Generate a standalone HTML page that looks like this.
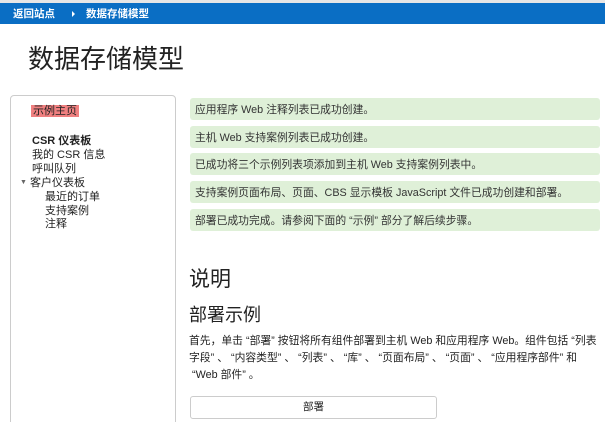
<!DOCTYPE html>
<html><head><meta charset="utf-8"><style>
*{margin:0;padding:0;box-sizing:border-box}
html,body{width:605px;height:422px;overflow:hidden}
body{background:#fff;font-family:"Liberation Sans","Noto Sans CJK SC",sans-serif;color:#222;position:relative}
.top{position:absolute;left:0;top:0;width:605px;height:3px;background:#e6e6e6}
.bar{position:absolute;left:0;top:3px;width:605px;height:21px;background:#0a6ec4;color:#fff;font-size:10.5px;font-weight:bold;line-height:22px;padding-left:13px}
.bar .arr{display:inline-block;width:0;height:0;border-left:3px solid #fff;border-top:3px solid transparent;border-bottom:3px solid transparent;margin:0 11px 1px 17px;vertical-align:middle}
h1{position:absolute;left:28px;top:42px;font-size:26px;font-weight:normal;color:#222;line-height:34px}
.nav{position:absolute;left:10px;top:95px;width:166px;height:340px;border:1px solid #ccc;border-radius:4px}
.nav div{position:absolute;font-size:11px;line-height:14px;white-space:nowrap}
.hl{background:#f08080;padding:0 2px}
.msg{position:absolute;left:190px;width:410px;height:22px;background:#dff0d8;border-radius:3px;font-size:10.8px;display:flex;align-items:center;padding-left:5px;color:#333}
h2{position:absolute;left:189px;top:266px;font-size:21px;font-weight:normal;line-height:28px}
h3{position:absolute;left:189px;top:302px;font-size:18px;font-weight:normal;line-height:26px}
p{position:absolute;left:189px;top:333px;width:415px;font-size:10.8px;line-height:17px;color:#222;white-space:nowrap}
.btn{position:absolute;left:190px;top:396px;width:247px;height:23px;border:1px solid #ccc;border-radius:3px;font-size:10.5px;line-height:21px;text-align:center}
</style></head><body>
<div class="top"></div>
<div class="bar">返回站点<span class="arr"></span>数据存储模型</div>
<h1>数据存储模型</h1>
<div class="nav">
<div style="left:20px;top:8px"><span class="hl">示例主页</span></div>
<div style="left:21px;top:38px;font-weight:bold">CSR 仪表板</div>
<div style="left:21px;top:52px">我的 CSR 信息</div>
<div style="left:21px;top:66px">呼叫队列</div>
<div style="left:9px;top:80px"><span style="font-size:7px;color:#666;vertical-align:middle">▼</span> 客户仪表板</div>
<div style="left:34px;top:94px">最近的订单</div>
<div style="left:34px;top:108px">支持案例</div>
<div style="left:34px;top:121px">注释</div>
</div>
<div class="msg" style="top:98px">应用程序 Web 注释列表已成功创建。</div>
<div class="msg" style="top:126px">主机 Web 支持案例列表已成功创建。</div>
<div class="msg" style="top:153px">已成功将三个示例列表项添加到主机 Web 支持案例列表中。</div>
<div class="msg" style="top:181px">支持案例页面布局、页面、CBS 显示模板 JavaScript 文件已成功创建和部署。</div>
<div class="msg" style="top:209px">部署已成功完成。请参阅下面的 “示例” 部分了解后续步骤。</div>
<h2>说明</h2>
<h3>部署示例</h3>
<p>首先，单击 “部署” 按钮将所有组件部署到主机 Web 和应用程序 Web。组件包括 “列表<br>字段” 、 “内容类型” 、 “列表” 、 “库” 、 “页面布局” 、 “页面” 、 “应用程序部件” 和<br>&nbsp;“Web 部件” 。</p>
<div class="btn">部署</div>
</body></html>
